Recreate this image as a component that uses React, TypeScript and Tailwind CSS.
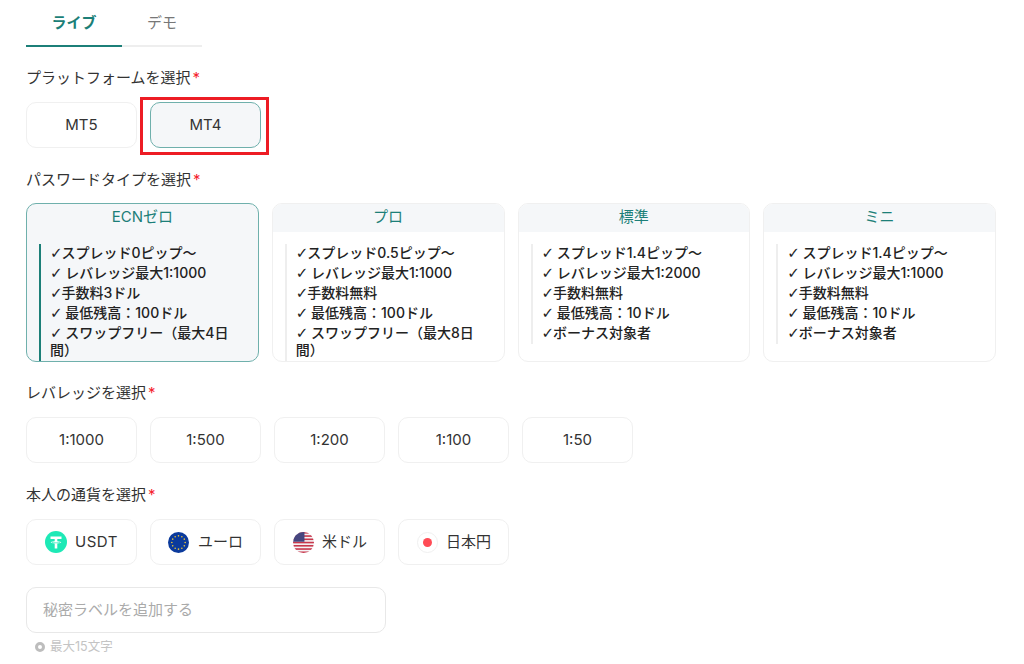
import React from 'react';

const FONT = "font-['Inter','Noto_Sans_CJK_JP',sans-serif]";

const planes = [
  {
    name: 'ECNゼロ',
    active: true,
    tall: true,
    items: ['スプレッド0ピップ～', ' レバレッジ最大1:1000', '手数料3ドル', ' 最低残高：100ドル', ' スワップフリー（最大4日間）'],
  },
  {
    name: 'プロ',
    active: false,
    tall: true,
    items: ['スプレッド0.5ピップ～', ' レバレッジ最大1:1000', '手数料無料', ' 最低残高：100ドル', ' スワップフリー（最大8日間）'],
  },
  {
    name: '標準',
    active: false,
    tall: false,
    items: [' スプレッド1.4ピップ～', ' レバレッジ最大1:2000', '手数料無料', ' 最低残高：10ドル', 'ボーナス対象者'],
  },
  {
    name: 'ミニ',
    active: false,
    tall: false,
    items: [' スプレッド1.4ピップ～', ' レバレッジ最大1:1000', '手数料無料', ' 最低残高：10ドル', 'ボーナス対象者'],
  },
];

const Etiqueta = ({ texto, className }: { texto: string; className: string }) => (
  <div className={`text-[15px] leading-[20px] text-[#333] ${className}`}>
    {texto}
    <span className="text-[#f5222d] ml-[2px]">*</span>
  </div>
);

const Opcion = ({ children, active }: { children: React.ReactNode; active?: boolean }) => (
  <div
    className={`w-[111px] h-[46px] rounded-[10px] border flex items-center justify-center text-[15px] text-[#333] ${
      active ? 'border-[#6fb0ac] bg-[#f5f7f9]' : 'border-[#f0f0f0] bg-white'
    }`}
  >
    {children}
  </div>
);

const Usdt = () => (
  <svg width="22" height="22" viewBox="0 0 22 22" className="mr-[8px]">
    <circle cx="11" cy="11" r="11" fill="#1de9b6" />
    <path d="M5.500 5.500h11v2.600h-4.200v2.100c2.300.1 4 .6 4 1.100s-1.700 1-4 1.100v5.100H9.700v-5.100c-2.300-.1-4-.6-4-1.100s1.700-1 4-1.100V8.100H5.500z" fill="#fff" />
    <path d="M6.800 11.300c1 .35 2.500.55 4.200.55s3.200-.2 4.200-.55" stroke="#1de9b6" strokeWidth="0.7" fill="none" />
  </svg>
);

const Euro = () => {
  const estrellas = Array.from({ length: 12 }, (_, i) => {
    const a = (i * Math.PI) / 6;
    return { x: 11 + 7 * Math.cos(a), y: 11 + 7 * Math.sin(a) };
  });
  return (
    <svg width="21" height="21" viewBox="0 0 22 22" className="mr-[9px]">
      <circle cx="11" cy="11" r="11" fill="#0b3a9c" />
      {estrellas.map((e, i) => (
        <circle key={i} cx={e.x} cy={e.y} r="0.85" fill="#e8c53a" />
      ))}
    </svg>
  );
};

const Usa = () => (
  <svg width="21" height="21" viewBox="0 0 22 22" className="mr-[8px] ml-[1px]">
    <defs>
      <clipPath id="c-usa">
        <circle cx="11" cy="11" r="11" />
      </clipPath>
    </defs>
    <g clipPath="url(#c-usa)">
      <rect width="22" height="22" fill="#f4f4f6" />
      {[0, 3.4, 6.8, 10.2, 13.6, 17, 20.4].map((y) => (
        <rect key={y} x="0" y={y} width="22" height="1.7" fill="#c8384c" />
      ))}
      <rect width="12" height="10.2" fill="#46467f" />
    </g>
  </svg>
);

const Japon = () => (
  <span className="w-[21px] h-[21px] rounded-full border border-[#f0f0f0] flex items-center justify-center ml-[1px] mr-[8px]">
    <span className="w-[9px] h-[9px] rounded-full bg-[#ff4b55]" />
  </span>
);

export default function App() {
  return (
    <div className={`w-[1024px] h-[664px] bg-white overflow-hidden px-[26px] ${FONT}`}>
      {/* pestañas */}
      <div className="flex w-[176px] h-[47px] border-b-2 border-[#eeeeee]">
        <div className="w-[96px] h-[47px] border-b-2 border-[#1c7f78] pt-[14px] text-center text-[15px] leading-[18px] font-semibold text-[#1c7f78]">
          ライブ
        </div>
        <div className="w-[80px] pt-[14px] text-center text-[15px] leading-[18px] text-[#777]">デモ</div>
      </div>

      <Etiqueta texto="プラットフォームを選択" className="mt-[21px]" />
      <div className="flex gap-[13px] mt-[14px]">
        <Opcion>MT5</Opcion>
        <div className="relative">
          <Opcion active>MT4</Opcion>
          <div className="absolute left-[-10px] top-[-5px] w-[129px] h-[58px] border-[3px] border-[#ed1c24]" />
        </div>
      </div>

      <Etiqueta texto="パスワードタイプを選択" className="mt-[22px]" />
      <div className="grid grid-cols-4 gap-[13px] w-[970px] mt-[13px]">
        {planes.map((p) => (
          <div
            key={p.name}
            className={`h-[159px] rounded-[10px] border overflow-hidden ${
              p.active ? 'border-[#6fb0ac] bg-[#f5f7f9]' : 'border-[#f0f0f0] bg-white'
            }`}
          >
            <div className={`h-[28px] text-center text-[15px] leading-[26px] text-[#1c7f78] ${p.active ? '' : 'bg-[#f5f7f9]'}`}>
              {p.name}
            </div>
            <div
              className={`ml-[12px] mt-[12px] pl-[9px] pr-[12px] border-l-2 text-[14px] leading-[17px] font-medium text-[#222] whitespace-pre-wrap ${
                p.active ? 'border-[#1c7f78]' : 'border-[#eeeeee]'
              } ${p.tall ? 'h-[120px]' : 'h-[100px]'}`}
            >
              {p.items.map((t) => (
                <div key={t} className="mb-[3px]">
                  <span className="text-[15px] font-bold leading-[10px] tracking-[-1px] font-['DejaVu_Sans',sans-serif]">✓</span>
                  {t}
                </div>
              ))}
            </div>
          </div>
        ))}
      </div>

      <Etiqueta texto="レバレッジを選択" className="mt-[21px]" />
      <div className="flex gap-[13px] mt-[14px]">
        <Opcion>1:1000</Opcion>
        <Opcion>1:500</Opcion>
        <Opcion>1:200</Opcion>
        <Opcion>1:100</Opcion>
        <Opcion>1:50</Opcion>
      </div>

      <Etiqueta texto="本人の通貨を選択" className="mt-[22px]" />
      <div className="flex gap-[13px] mt-[14px]">
        <Opcion>
          <Usdt />
          <span className="tracking-[0.5px]">USDT</span>
        </Opcion>
        <Opcion>
          <Euro />
          ユーロ
        </Opcion>
        <Opcion>
          <Usa />
          米ドル
        </Opcion>
        <Opcion>
          <Japon />
          日本円
        </Opcion>
      </div>

      <input
        placeholder="秘密ラベルを追加する"
        className="block mt-[22px] w-[360px] h-[46px] rounded-[10px] border border-[#e8e8e8] pl-[16px] pr-[16px] pb-[2px] text-[15px] outline-none placeholder:text-[#aaaaaa]"
      />
      <div className="flex items-center mt-[6px] text-[12.5px] leading-[16px] text-[#c4c4c4]">
        <span className="w-[10px] h-[10px] rounded-full border-[3px] border-[#bdbdbd] mr-[5px] ml-[9px]" />
        最大15文字
      </div>
    </div>
  );
}
